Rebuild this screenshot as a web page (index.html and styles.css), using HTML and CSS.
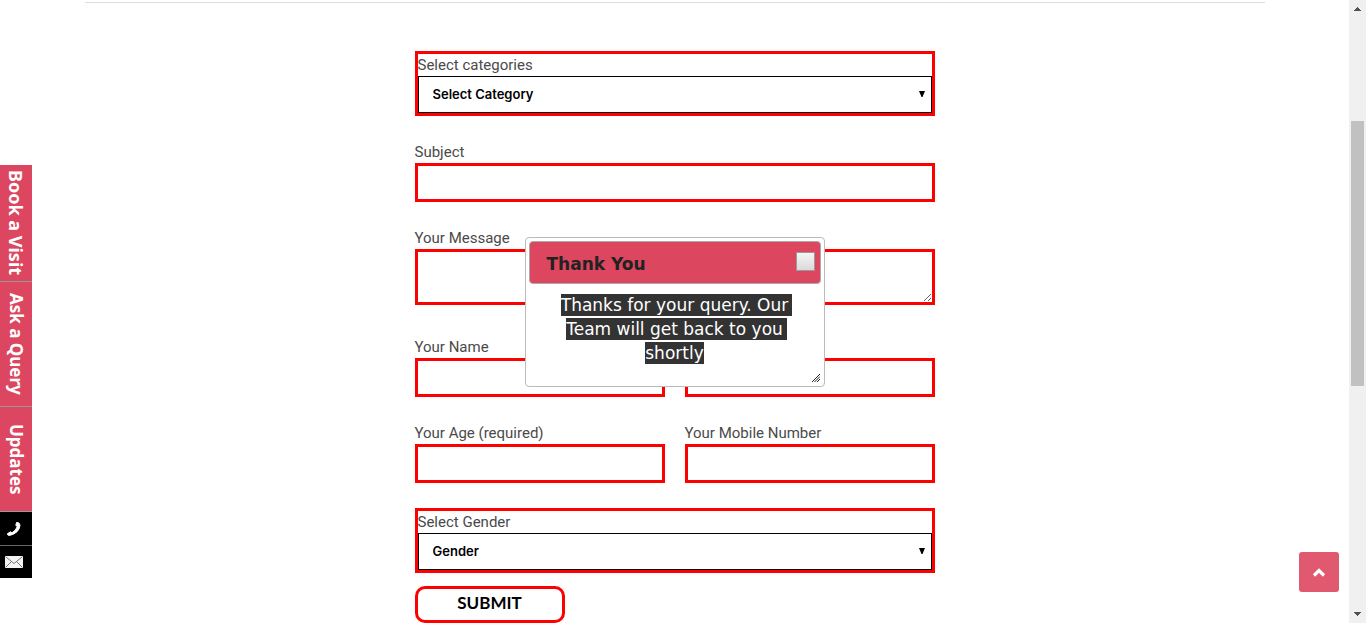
FILE: index.html
```html
<!DOCTYPE html>
<html lang="en">
<head>
<meta charset="utf-8">
<title>Ask a Query</title>
<link rel="stylesheet" href="styles.css">
</head>
<body>
<div class="page">
  <main class="container">
    <form class="query-form">
      <div class="select-box">
        <label for="category">Select categories</label>
        <div class="select-wrap">
          <select id="category"><option>Select Category</option></select>
          <svg class="caret" viewBox="0 0 6 6" aria-hidden="true"><path d="M0 0h6L3.5 6h-1z"/></svg>
        </div>
      </div>
      <div class="field">
        <label for="subject">Subject</label>
        <input id="subject" type="text">
      </div>
      <div class="field message">
        <label for="message">Your Message</label>
        <textarea id="message"></textarea>
      </div>
      <div class="row">
        <div class="field">
          <label for="name">Your Name</label>
          <input id="name" type="text">
        </div>
        <div class="field">
          <input type="email" aria-label="Email">
        </div>
      </div>
      <div class="row">
        <div class="field">
          <label for="age">Your Age (required)</label>
          <input id="age" type="text">
        </div>
        <div class="field">
          <label for="mobile">Your Mobile Number</label>
          <input id="mobile" type="tel">
        </div>
      </div>
      <div class="select-box">
        <label for="gender">Select Gender</label>
        <div class="select-wrap">
          <select id="gender"><option>Gender</option></select>
          <svg class="caret" viewBox="0 0 6 6" aria-hidden="true"><path d="M0 0h6L3.5 6h-1z"/></svg>
        </div>
      </div>
      <button class="submit" type="submit">SUBMIT</button>
    </form>
  </main>

  <nav class="side-tabs">
    <a class="tab visit" href="#visit">Book a Visit</a>
    <a class="tab query" href="#query">Ask a Query</a>
    <a class="tab updates" href="#updates">Updates</a>
    <a class="tab icon" href="#call" aria-label="Call">
      <svg width="16" height="18" viewBox="0 0 16 18"><path d="M10.500 2.500Q13.500 2 14 5Q13.500 13 3.500 15.500Q1.500 15.500 1.300 13.800L4.500 11.800L6 12.800Q10 10.500 11.300 6.500L9.800 5.500Z" fill="#fff" stroke="#fff" stroke-width="1" stroke-linejoin="round"/></svg>
    </a>
    <a class="tab icon" href="#mail" aria-label="Email">
      <svg width="18" height="12" viewBox="0 0 18 12"><rect width="18" height="12" rx="1" fill="#f4f4f4"/><path d="M1 1l8 6.500L17 1M1 11l5.500-5.500M17 11l-5.500-5.500" fill="none" stroke="#777"/></svg>
    </a>
  </nav>

  <section class="dialog" role="dialog" aria-labelledby="dialog-title">
    <header class="dialog-bar">
      <h2 id="dialog-title">Thank You</h2>
      <button class="close" type="button" aria-label="Close"></button>
    </header>
    <p class="dialog-text"><mark class="wrapped">Thanks for your query. Our Team will get back to you</mark> <mark>shortly</mark></p>
    <svg class="grip" viewBox="0 0 8 8" aria-hidden="true"><path d="M0 8L8 0M2.500 8L8 2.500M5 8l3-3" stroke="#222" fill="none"/></svg>
  </section>

  <a class="to-top" href="#top" aria-label="Back to top">
    <svg width="14" height="10" viewBox="0 0 14 10"><path d="M2 8.500l5-5 5 5" fill="none" stroke="#fff" stroke-width="3.200"/></svg>
  </a>
</div>
<div class="scrollbar" aria-hidden="true">
  <svg width="7" height="4" viewBox="0 0 7 4"><path d="M0 4h7V3H6V2H5V1H4V0H3v1H2v1H1v1H0z" fill="#505050"/></svg>
  <div class="track"><div class="thumb"></div></div>
  <svg width="7" height="4" viewBox="0 0 7 4"><path d="M0 0h7v1H6v1H5v1H4v1H3V3H2V2H1V1H0z" fill="#505050"/></svg>
</div>
</body>
</html>
```
FILE: styles.css
```css
* { box-sizing: border-box; }

body {
  margin: 0;
  display: flex;
  height: 100vh;
  overflow: hidden;
  background: #fff;
  color: #4a4a4a;
  font: 15px/22px Roboto, sans-serif;
}

.page {
  position: relative;
  flex: 1;
  min-width: 0;
  overflow: hidden;
}

.container {
  max-width: 1180px;
  margin: 2px auto 0;
  border-top: 1px solid #ddd;
}

.query-form {
  display: flex;
  flex-direction: column;
  gap: 25px;
  max-width: 520px;
  margin: 48px auto 0;
}

label { display: block; }

.select-box { border: 3px solid #f00; }

.select-wrap { position: relative; }

select {
  display: block;
  width: 100%;
  height: 37px;
  padding: 0 14px 2px;
  border: 1px solid #000;
  border-radius: 0;
  appearance: none;
  background: #fff;
  color: #000;
  font: 600 13px Inter, sans-serif;
}

.caret {
  position: absolute;
  right: 7px;
  top: 15px;
  width: 6px;
  height: 6px;
  pointer-events: none;
}

.field { min-width: 0; }

input, textarea {
  display: block;
  width: 100%;
  height: 39px;
  padding: 0 12px;
  border: 3px solid #f00;
  border-radius: 0;
  background: #fff;
  font: inherit;
}

textarea {
  height: 56px;
  resize: vertical;
}

.message { margin-bottom: 6px; }

.row {
  display: grid;
  grid-template-columns: 1fr 1fr;
  align-items: end;
  gap: 20px;
}

.submit {
  width: 150px;
  height: 37px;
  margin-top: -12px;
  padding: 0 0 4px;
  border: 3px solid #f00;
  border-radius: 10px;
  background: #fff;
  color: #000;
  font: 700 17px Lato, sans-serif;
}

.side-tabs {
  position: absolute;
  left: 0;
  top: 165px;
  width: 32px;
}

.tab {
  display: flex;
  align-items: center;
  justify-content: center;
  border-bottom: 1px solid #999;
  background: #dd4660;
  color: #fff;
  font: 700 17px/32px "Noto Sans", sans-serif;
  text-decoration: none;
  writing-mode: vertical-rl;
}

.visit {
  height: 117px;
  font-size: 18px;
}

.query { height: 125px; }
.updates { height: 105px; }

.icon {
  height: 34px;
  padding-right: 4px;
  border-color: #666;
  background: #000;
  writing-mode: horizontal-tb;
}

.icon:last-child {
  height: 32px;
  border: 0;
}

.dialog {
  position: absolute;
  left: calc(50% - 150px);
  top: 237px;
  width: 300px;
  min-height: 150px;
  padding: 3px;
  border: 1px solid #bbb;
  border-radius: 4px;
  background: #fff;
}

.dialog-bar {
  display: flex;
  align-items: center;
  justify-content: space-between;
  height: 43px;
  padding: 0 5px 2px 17px;
  border: 1px solid #aaa;
  border-radius: 4px;
  background: #dc465f;
}

.dialog-bar h2 {
  margin: 0;
  padding-top: 4px;
  color: #222;
  font: 700 17px/24px "DejaVu Sans", sans-serif;
}

.close {
  width: 19px;
  height: 19px;
  padding: 0;
  border: 1px solid #999;
  background: linear-gradient(#f5f5f5, #dadada);
}

.dialog-text {
  margin: 0;
  padding: 9px 28px 0;
  color: #fff;
  font: 17px/24px "DejaVu Sans", sans-serif;
  text-align: center;
}

.dialog-text mark {
  padding: 1px 0;
  background: #333;
  color: #fff;
}

.dialog-text .wrapped {
  box-decoration-break: clone;
  -webkit-box-decoration-break: clone;
  box-shadow: 4px 0 #333;
}

.grip {
  position: absolute;
  right: 4px;
  bottom: 4px;
  width: 8px;
  height: 8px;
}

.to-top {
  position: absolute;
  right: 10px;
  bottom: 31px;
  display: flex;
  align-items: center;
  justify-content: center;
  width: 40px;
  height: 40px;
  border-radius: 3px;
  background: #e1596f;
}

.scrollbar {
  display: flex;
  flex-direction: column;
  align-items: center;
  width: 17px;
  padding: 7px 0;
  background: #f0f0f0;
}

.track {
  flex: 1;
  width: 13px;
  padding-top: 110px;
}

.thumb {
  height: 54%;
  background: #c1c1c1;
}
```
